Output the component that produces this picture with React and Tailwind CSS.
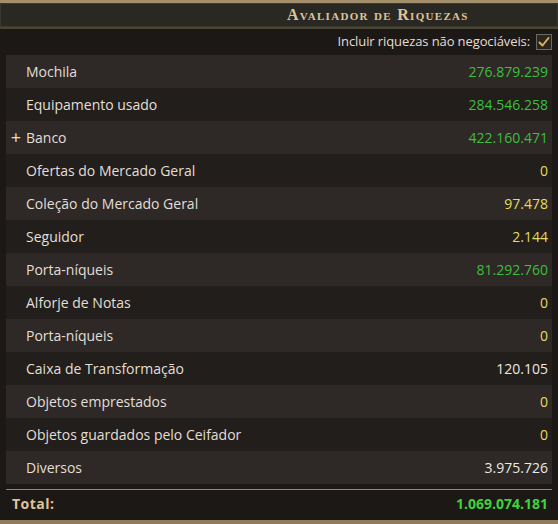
import React from 'react';

const rows = [
  { label: 'Mochila', value: '276.879.239', color: 'text-[#3cbf3c]' },
  { label: 'Equipamento usado', value: '284.546.258', color: 'text-[#3cbf3c]' },
  { label: 'Banco', value: '422.160.471', color: 'text-[#3cbf3c]', plus: true },
  { label: 'Ofertas do Mercado Geral', value: '0', color: 'text-[#e6dc5c]' },
  { label: 'Coleção do Mercado Geral', value: '97.478', color: 'text-[#e6dc5c]' },
  { label: 'Seguidor', value: '2.144', color: 'text-[#e6dc5c]' },
  { label: 'Porta-níqueis', value: '81.292.760', color: 'text-[#3cbf3c]' },
  { label: 'Alforje de Notas', value: '0', color: 'text-[#e6dc5c]' },
  { label: 'Porta-níqueis', value: '0', color: 'text-[#e6dc5c]' },
  { label: 'Caixa de Transformação', value: '120.105', color: 'text-[#ece8e2]' },
  { label: 'Objetos emprestados', value: '0', color: 'text-[#e6dc5c]' },
  { label: 'Objetos guardados pelo Ceifador', value: '0', color: 'text-[#e6dc5c]' },
  { label: 'Diversos', value: '3.975.726', color: 'text-[#ece8e2]' },
];

const App = () => {
  return (
    <div
      className="w-[558px] h-[524px] bg-[#1c1815] flex flex-col overflow-hidden"
      style={{ fontFamily: '"Open Sans", "Noto Sans", sans-serif' }}
    >
      {/* top frame */}
      <div className="h-[3px] bg-[#a38f6b]" />

      {/* Title bar */}
      <div className="h-[24px] border border-[#3b382e] bg-[#2a2822] flex items-center pl-[286px]">
        <span
          className="text-[16px] leading-none tracking-[1.3px] font-bold text-[#dcc49c] [font-variant:small-caps]"
          style={{ fontFamily: '"Liberation Serif", serif' }}
        >
          Avaliador de Riquezas
        </span>
      </div>
      <div className="h-[2px] bg-[#4a4434]" />

      {/* Checkbox row */}
      <div className="h-[26px] flex items-center justify-end pr-[6px] gap-[6px]">
        <span className="text-[13px] tracking-[-0.1px] text-[#e2ded8]">Incluir riquezas não negociáveis:</span>
        <div className="w-[16px] h-[16px] border border-[#6e675f] bg-[#2a2521] flex items-center justify-center">
          <svg width="12" height="12" viewBox="0 0 12 12">
            <path d="M1.5 6.5 L4.5 9.5 L10.5 2" fill="none" stroke="#d8b35a" strokeWidth="2" strokeLinecap="round" strokeLinejoin="round" />
          </svg>
        </div>
      </div>

      {/* List */}
      <div className="px-[6px] flex flex-col">
        {rows.map((row, i) => (
          <div
            key={i}
            className={`h-[33px] flex items-center justify-between pr-[4px] pb-[1px] ${i % 2 === 0 ? 'bg-[#2e2926]' : 'bg-[#221e1b]'}`}
          >
            <div className="flex items-center">
              <span className="w-[20px] text-center text-[18px] leading-none text-[#e2ded8]">{row.plus ? '+' : ''}</span>
              <span className="text-[14px] text-[#e2ded8]">{row.label}</span>
            </div>
            <span className={`text-[14px] ${row.color}`}>{row.value}</span>
          </div>
        ))}
      </div>

      {/* Total */}
      <div className="mt-[5px] mx-[6px] h-[1px] bg-[#8c8682]" />
      <div className="h-[30px] flex items-center justify-between pl-[12px] pr-[10px] pb-[3px]">
        <span className="text-[14px] font-bold tracking-[0.5px] text-[#dfc49b]">Total:</span>
        <span className="text-[14px] font-bold text-[#3fd23f]">1.069.074.181</span>
      </div>
      <div className="h-[4px] bg-[#8f7c5a]" />
    </div>
  );
};

export default App;
